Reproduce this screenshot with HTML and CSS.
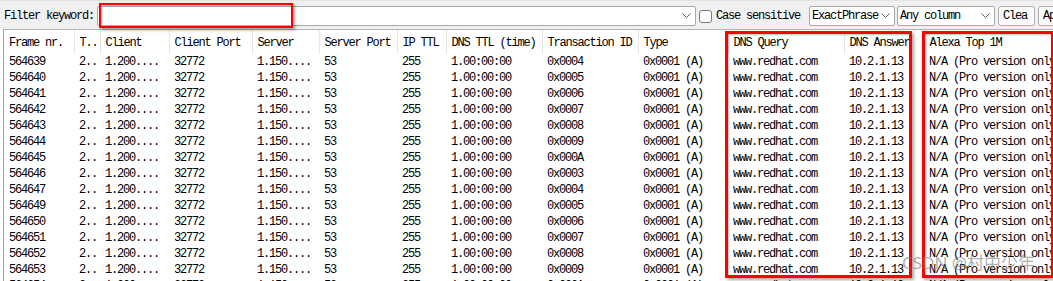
FILE: index.html
```html
<!DOCTYPE html>
<html>
<head>
<meta charset="utf-8">
<link rel="stylesheet" href="styles.css">
</head>
<body>
<div class="toolbar">
  <span class="label">Filter keyword:</span>
  <div class="input combo">
    <span class="combo-text"></span>
    <svg class="chev" width="9" height="6" viewBox="0 0 9 6"><polyline points="0.5,0.5 4.5,4.5 8.5,0.5" fill="none" stroke="#606060" stroke-width="1"/></svg>
  </div>
  <span class="check"></span>
  <span class="check-label">Case sensitive</span>
  <div class="select sel-mode">
    <span class="combo-text">ExactPhrase</span>
    <svg class="chev" width="9" height="6" viewBox="0 0 9 6"><polyline points="0.5,0.5 4.5,4.5 8.5,0.5" fill="none" stroke="#606060" stroke-width="1"/></svg>
  </div>
  <div class="select sel-col">
    <span class="combo-text">Any column</span>
    <svg class="chev" width="9" height="6" viewBox="0 0 9 6"><polyline points="0.5,0.5 4.5,4.5 8.5,0.5" fill="none" stroke="#606060" stroke-width="1"/></svg>
  </div>
  <div class="btn btn-clear">Clea</div>
  <div class="btn btn-a">Apply</div>
</div>

<div class="grid">
  <table class="list">
    <colgroup>
      <col class="w70"><col class="w26"><col class="w69"><col class="w83"><col class="w67"><col class="w78"><col class="w49"><col class="w96"><col class="w96"><col class="w90"><col class="w116"><col class="w80"><col class="w200">
    </colgroup>
    <thead>
      <tr>
        <th>Frame nr.</th><th>T..</th><th>Client</th><th>Client Port</th><th>Server</th><th>Server Port</th><th>IP TTL</th><th>DNS TTL (time)</th><th>Transaction ID</th><th>Type</th><th>DNS Query</th><th>DNS Answer</th><th>Alexa Top 1M</th>
      </tr>
    </thead>
    <tbody>
      <tr><td>564639</td><td>2..</td><td>1.200....</td><td>32772</td><td>1.150....</td><td>53</td><td>255</td><td>1.00:00:00</td><td>0x0004</td><td>0x0001 (A)</td><td>www.redhat.com</td><td>10.2.1.13</td><td>N/A (Pro version only)</td></tr>
      <tr><td>564640</td><td>2..</td><td>1.200....</td><td>32772</td><td>1.150....</td><td>53</td><td>255</td><td>1.00:00:00</td><td>0x0005</td><td>0x0001 (A)</td><td>www.redhat.com</td><td>10.2.1.13</td><td>N/A (Pro version only)</td></tr>
      <tr><td>564641</td><td>2..</td><td>1.200....</td><td>32772</td><td>1.150....</td><td>53</td><td>255</td><td>1.00:00:00</td><td>0x0006</td><td>0x0001 (A)</td><td>www.redhat.com</td><td>10.2.1.13</td><td>N/A (Pro version only)</td></tr>
      <tr><td>564642</td><td>2..</td><td>1.200....</td><td>32772</td><td>1.150....</td><td>53</td><td>255</td><td>1.00:00:00</td><td>0x0007</td><td>0x0001 (A)</td><td>www.redhat.com</td><td>10.2.1.13</td><td>N/A (Pro version only)</td></tr>
      <tr><td>564643</td><td>2..</td><td>1.200....</td><td>32772</td><td>1.150....</td><td>53</td><td>255</td><td>1.00:00:00</td><td>0x0008</td><td>0x0001 (A)</td><td>www.redhat.com</td><td>10.2.1.13</td><td>N/A (Pro version only)</td></tr>
      <tr><td>564644</td><td>2..</td><td>1.200....</td><td>32772</td><td>1.150....</td><td>53</td><td>255</td><td>1.00:00:00</td><td>0x0009</td><td>0x0001 (A)</td><td>www.redhat.com</td><td>10.2.1.13</td><td>N/A (Pro version only)</td></tr>
      <tr><td>564645</td><td>2..</td><td>1.200....</td><td>32772</td><td>1.150....</td><td>53</td><td>255</td><td>1.00:00:00</td><td>0x000A</td><td>0x0001 (A)</td><td>www.redhat.com</td><td>10.2.1.13</td><td>N/A (Pro version only)</td></tr>
      <tr><td>564646</td><td>2..</td><td>1.200....</td><td>32772</td><td>1.150....</td><td>53</td><td>255</td><td>1.00:00:00</td><td>0x0003</td><td>0x0001 (A)</td><td>www.redhat.com</td><td>10.2.1.13</td><td>N/A (Pro version only)</td></tr>
      <tr><td>564647</td><td>2..</td><td>1.200....</td><td>32772</td><td>1.150....</td><td>53</td><td>255</td><td>1.00:00:00</td><td>0x0004</td><td>0x0001 (A)</td><td>www.redhat.com</td><td>10.2.1.13</td><td>N/A (Pro version only)</td></tr>
      <tr><td>564649</td><td>2..</td><td>1.200....</td><td>32772</td><td>1.150....</td><td>53</td><td>255</td><td>1.00:00:00</td><td>0x0005</td><td>0x0001 (A)</td><td>www.redhat.com</td><td>10.2.1.13</td><td>N/A (Pro version only)</td></tr>
      <tr><td>564650</td><td>2..</td><td>1.200....</td><td>32772</td><td>1.150....</td><td>53</td><td>255</td><td>1.00:00:00</td><td>0x0006</td><td>0x0001 (A)</td><td>www.redhat.com</td><td>10.2.1.13</td><td>N/A (Pro version only)</td></tr>
      <tr><td>564651</td><td>2..</td><td>1.200....</td><td>32772</td><td>1.150....</td><td>53</td><td>255</td><td>1.00:00:00</td><td>0x0007</td><td>0x0001 (A)</td><td>www.redhat.com</td><td>10.2.1.13</td><td>N/A (Pro version only)</td></tr>
      <tr><td>564652</td><td>2..</td><td>1.200....</td><td>32772</td><td>1.150....</td><td>53</td><td>255</td><td>1.00:00:00</td><td>0x0008</td><td>0x0001 (A)</td><td>www.redhat.com</td><td>10.2.1.13</td><td>N/A (Pro version only)</td></tr>
      <tr><td>564653</td><td>2..</td><td>1.200....</td><td>32772</td><td>1.150....</td><td>53</td><td>255</td><td>1.00:00:00</td><td>0x0009</td><td>0x0001 (A)</td><td>www.redhat.com</td><td>10.2.1.13</td><td>N/A (Pro version only)</td></tr>
      <tr><td>564654</td><td>2..</td><td>1.200....</td><td>32772</td><td>1.150....</td><td>53</td><td>255</td><td>1.00:00:00</td><td>0x000A</td><td>0x0001 (A)</td><td>www.redhat.com</td><td>10.2.1.13</td><td>N/A (Pro version only)</td></tr>
    </tbody>
  </table>
</div>

<div class="mark mark-filter"></div>
<div class="mark mark-dns"></div>
<div class="mark mark-alexa"></div>
<div class="watermark">CSDN @村中少年</div>
</body>
</html>
```

FILE: styles.css
```css
html, body {
  margin: 0;
  padding: 0;
}
body {
  width: 1053px;
  height: 281px;
  overflow: hidden;
  position: relative;
  background: #ffffff;
  font-family: "Liberation Mono", "DejaVu Sans Mono", monospace;
  font-size: 12px;
  letter-spacing: -1.2px;
  color: #000;
}
.toolbar {
  height: 26px;
  padding-top: 2px;
  padding-left: 4px;
  display: flex;
  align-items: center;
  background: #f0f0f0;
  border-top: 1px solid #e3e3e3;
  box-sizing: content-box;
  white-space: nowrap;
  overflow: hidden;
}
.toolbar > * {
  flex: none;
}
.label {
  width: 93px;
}
.input, .select {
  height: 20px;
  box-sizing: border-box;
  border: 1px solid #a9a9a9;
  border-radius: 2px;
  background: #fff;
  display: flex;
  align-items: center;
  position: relative;
  overflow: hidden;
}
.input {
  width: 599px;
}
.combo-text {
  padding-left: 2px;
  flex: 1;
  overflow: hidden;
}
.chev {
  flex: none;
  margin-right: 4px;
  margin-left: 2px;
}
.check {
  width: 13px;
  height: 13px;
  box-sizing: border-box;
  border: 1px solid #7a7a7a;
  border-radius: 3px;
  background: #fff;
  margin-left: 3px;
}
.check-label {
  margin-left: 4px;
  width: 84px;
}
.sel-mode {
  width: 86px;
  margin-left: 9px;
}
.sel-col {
  width: 98px;
  margin-left: 2px;
}
.btn {
  height: 20px;
  box-sizing: border-box;
  border: 1px solid #adadad;
  border-radius: 3px;
  background: #fbfbfb;
  display: flex;
  align-items: center;
  padding-left: 4px;
  overflow: hidden;
}
.btn-clear {
  width: 37px;
  margin-left: 3px;
}
.btn-a {
  width: 40px;
  margin-left: 3px;
}
.grid {
  margin-left: 3px;
  border-left: 1px solid #a0a0a0;
  border-top: 1px solid #b4b4b4;
  background: #fff;
}
.list {
  border-collapse: collapse;
  table-layout: fixed;
  width: 1120px;
}
.w70 { width: 70px; }
.w26 { width: 26px; }
.w69 { width: 69px; }
.w83 { width: 83px; }
.w67 { width: 67px; }
.w78 { width: 78px; }
.w49 { width: 49px; }
.w96 { width: 96px; }
.w90 { width: 90px; }
.w116 { width: 116px; }
.w80 { width: 80px; }
.w200 { width: 200px; }
.list th {
  height: 23px;
  padding: 1px 0 0 5px;
  text-align: left;
  font-weight: normal;
  white-space: nowrap;
  overflow: hidden;
  border-right: 1px solid #e5e5e5;
  box-sizing: border-box;
}
.list td {
  height: 16px;
  line-height: 16px;
  padding: 0 0 0 5px;
  white-space: nowrap;
  overflow: hidden;
}
.list thead tr {
  height: 24px;
}
.mark {
  position: absolute;
  border: 3px solid #ff0000;
  box-shadow: 2px 2px 3px rgba(0, 0, 0, 0.35), inset 1px 1px 2px rgba(0, 0, 0, 0.25);
  box-sizing: border-box;
}
.mark-filter {
  left: 99px;
  top: 3px;
  width: 194px;
  height: 25px;
  border-width: 2px;
}
.mark-dns {
  left: 725px;
  top: 31px;
  width: 187px;
  height: 247px;
}
.mark-alexa {
  left: 922px;
  top: 31px;
  width: 132px;
  height: 247px;
}
.watermark {
  position: absolute;
  left: 902px;
  top: 249px;
  font-family: "Noto Sans", "Noto Sans CJK SC", sans-serif;
  font-size: 17px;
  letter-spacing: 0;
  color: rgba(120, 120, 120, 0.6);
  white-space: nowrap;
}
```
